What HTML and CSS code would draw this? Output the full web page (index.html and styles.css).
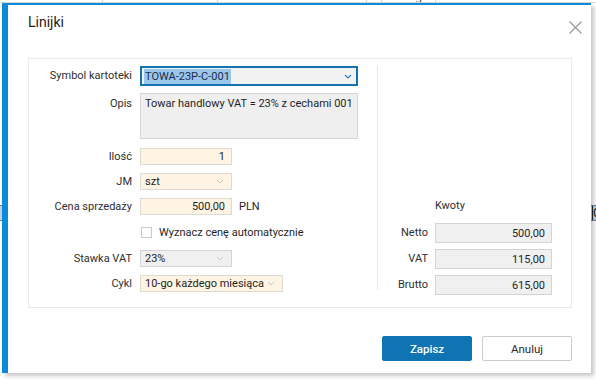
FILE: index.html
```html
<!DOCTYPE html>
<html lang="pl">
<head>
<meta charset="utf-8">
<title>Linijki</title>
<link rel="stylesheet" href="styles.css">
</head>
<body>
<div class="backdrop">
  <div class="bg-head">
    <span class="c1"></span>
    <span class="c2">Kontrahent</span>
    <span class="c3">10-11-2017</span>
    <span class="c4"></span>
    <span class="c5">Uwagi</span>
    <span class="c6"></span>
  </div>
  <div class="bg-row"><span>C</span></div>
</div>

<div class="dialog">
  <header class="dlg-head">
    <h1 class="dlg-title">Linijki</h1>
    <button class="close" aria-label="Zamknij">
      <svg width="13" height="13" viewBox="0 0 13 13"><path d="M0.5 0.5 L12.5 12.5 M12.5 0.5 L0.5 12.5" stroke="#9a9a9a" stroke-width="1.3" fill="none"/></svg>
    </button>
  </header>

  <div class="panel">
    <div class="form">
      <label class="lbl">Symbol kartoteki</label>
      <div class="field select focus wide">
        <span class="selected">TOWA-23P-C-001</span>
        <svg class="chev" width="8" height="5" viewBox="0 0 8 5"><path d="M1 1 L4 4 L7 1" stroke="#2b7dbd" stroke-width="1.1" fill="none"/></svg>
      </div>

      <label class="lbl lbl-top">Opis</label>
      <div class="field area wide">Towar handlowy VAT = 23% z cechami 001</div>

      <label class="lbl">Ilość</label>
      <div class="field beige short num">1</div>

      <label class="lbl">JM</label>
      <div class="field beige short select">
        <span>szt</span>
        <svg class="chev" width="8" height="5" viewBox="0 0 8 5"><path d="M1 1 L4 4 L7 1" stroke="#c8c8c8" stroke-width="1" fill="none"/></svg>
      </div>

      <label class="lbl">Cena sprzedaży</label>
      <div class="inline">
        <div class="field beige short num">500,00</div>
        <span class="unit">PLN</span>
      </div>

      <span class="lbl"></span>
      <label class="check-row"><span class="checkbox"></span><span>Wyznacz cenę automatycznie</span></label>

      <label class="lbl">Stawka VAT</label>
      <div class="field grey short select">
        <span>23%</span>
        <svg class="chev" width="8" height="5" viewBox="0 0 8 5"><path d="M1 1 L4 4 L7 1" stroke="#c8c8c8" stroke-width="1" fill="none"/></svg>
      </div>

      <label class="lbl">Cykl</label>
      <div class="field beige mid select">
        <span>10-go każdego miesiąca</span>
        <svg class="chev" width="8" height="5" viewBox="0 0 8 5"><path d="M1 1 L4 4 L7 1" stroke="#c8c8c8" stroke-width="1" fill="none"/></svg>
      </div>
    </div>

    <div class="totals">
      <span></span><span class="tot-title">Kwoty</span>
      <label class="lbl">Netto</label><div class="field grey num tot">500,00</div>
      <label class="lbl">VAT</label><div class="field grey num tot">115,00</div>
      <label class="lbl">Brutto</label><div class="field grey num tot">615,00</div>
    </div>
  </div>

  <footer class="actions">
    <button class="btn primary">Zapisz</button>
    <button class="btn">Anuluj</button>
  </footer>
</div>
</body>
</html>
```

FILE: styles.css
```css
* { box-sizing: border-box; }

html, body {
  margin: 0;
  padding: 0;
}

body {
  width: 596px;
  height: 380px;
  overflow: hidden;
  position: relative;
  background: #ffffff;
  font-family: Roboto, "Liberation Sans", Arial, sans-serif;
  font-size: 11px;
  color: #2b2b2b;
}

/* ---------- backdrop table ---------- */
.backdrop {
  height: 380px;
  background: #ffffff;
}

.bg-head {
  display: flex;
  height: 14px;
  margin-top: -11px;
  font-size: 12px;
  line-height: 14px;
  color: #444;
  border-bottom: 1px solid #d8d8d8;
}
.bg-head span {
  border-right: 1px solid #cfcfcf;
  padding: 0 4px;
  overflow: hidden;
  white-space: nowrap;
}
.bg-head .c1 { width: 103px; }
.bg-head .c2 { width: 115px; text-align: right; }
.bg-head .c3 { width: 149px; }
.bg-head .c4 { width: 15px; }
.bg-head .c5 { width: 54px; text-align: center; }
.bg-head .c6 { flex: 1; border-right: 0; }

.bg-row {
  margin-top: 202px;
  height: 16px;
  background: #bcd2e6;
  border-top: 1px solid #6f7f8f;
  border-bottom: 1px solid #6f7f8f;
  display: flex;
  justify-content: flex-end;
  font-size: 12px;
  line-height: 14px;
  color: #222;
}
.bg-row span { width: 4px; overflow: hidden; border-left: 1px solid #222; }

/* ---------- dialog ---------- */
.dialog {
  position: absolute;
  left: 2px;
  top: 3px;
  width: 589px;
  height: 370px;
  background: #ffffff;
  border-left: 6px solid #0b8bd7;
  border-top: 2px solid #0b8bd7;
  box-shadow: 3px 3px 4px rgba(0, 0, 0, 0.22);
  display: flex;
  flex-direction: column;
}

.dlg-head {
  height: 53px;
  display: flex;
  justify-content: space-between;
  align-items: flex-start;
  padding: 5px 9px 0 20px;
}

.dlg-title {
  margin: 0;
  font-size: 14px;
  font-weight: 400;
  line-height: 24px;
  color: #1e1e1e;
}

.close {
  border: 0;
  background: none;
  padding: 0;
  margin-top: 11px;
  width: 13px;
  height: 13px;
  display: block;
}
.close svg { display: block; }

/* ---------- panel ---------- */
.panel {
  margin: 0 19px 0 20px;
  height: 250px;
  border: 1px solid #e9e9e9;
  display: flex;
}

.form {
  width: 349px;
  border-right: 1px solid #e6e6e6;
  margin-top: 7px;
  margin-bottom: 17px;
  display: grid;
  grid-template-columns: 103px auto;
  column-gap: 8px;
  row-gap: 8px;
  grid-template-rows: 20px 46px 17px 17px 17px 19px 17px 17px;
  align-items: center;
  justify-items: start;
}

.form > .field:nth-child(4) { margin-top: -2px; }

.lbl {
  justify-self: end;
  text-align: right;
  color: #2e2e2e;
  line-height: 16px;
  white-space: nowrap;
}
.lbl-top { align-self: start; padding-top: 4px; margin-top: -2px; }

.field {
  height: 17px;
  border: 1px solid #d6d6d6;
  line-height: 15px;
  padding: 0 5px;
  color: #1f1f1f;
  white-space: nowrap;
  display: flex;
  align-items: center;
}

.beige { background: #fdf4e4; border-color: #dedad2; }
.grey { background: #f0f0f0; border-color: #d3d3d3; }

.num { justify-content: flex-end; padding-right: 6px; }

.select { justify-content: space-between; padding-left: 4px; padding-right: 7px; }
.chev { display: block; flex: none; }

.short { width: 92px; }
.mid { width: 143px; }
.wide { width: 218px; }

.focus {
  height: 20px;
  border: 2px solid #1472b1;
  background: #f2f2f2;
  padding-left: 2px;
  padding-right: 4px;
}
.selected {
  background: #9ac6ec;
  color: #1b2f4a;
  line-height: 15px;
  padding: 0 1px;
}

.area {
  height: 46px;
  align-items: flex-start;
  background: #efefef;
  border-color: #d4d4d4;
  padding: 2px 4px;
}

.inline {
  display: flex;
  align-items: center;
  gap: 7px;
}
.unit { color: #1f1f1f; }

.check-row {
  display: flex;
  align-items: center;
  gap: 7px;
  padding-left: 1px;
  color: #1f1f1f;
}
.checkbox {
  width: 11px;
  height: 11px;
  border: 1px solid #c9c9c9;
  background: #fff;
}

/* ---------- totals ---------- */
.totals {
  flex: 1;
  align-self: flex-end;
  margin-bottom: 12px;
  display: grid;
  grid-template-columns: 50px 117px;
  column-gap: 7px;
  grid-template-rows: 16px 20px 20px 20px;
  row-gap: 6px;
  align-items: center;
}
.totals .lbl { justify-self: end; }
.tot-title {
  align-self: start;
  color: #2e2e2e;
  line-height: 16px;
  position: relative;
  top: -3px;
}
.tot { height: 20px; width: 117px; }

/* ---------- footer ---------- */
.actions {
  display: flex;
  justify-content: flex-end;
  gap: 10px;
  margin-top: 28px;
  padding-right: 19px;
}

.btn {
  width: 90px;
  height: 25px;
  border: 1px solid #cbcbcb;
  border-radius: 2px;
  background: #ffffff;
  font-family: Roboto, "Liberation Sans", Arial, sans-serif;
  font-size: 11.5px;
  color: #2a2a2a;
  padding: 0;
}
.btn.primary {
  background: #0e74b2;
  border-color: #0e74b2;
  color: #ffffff;
  font-weight: 500;
}
```
